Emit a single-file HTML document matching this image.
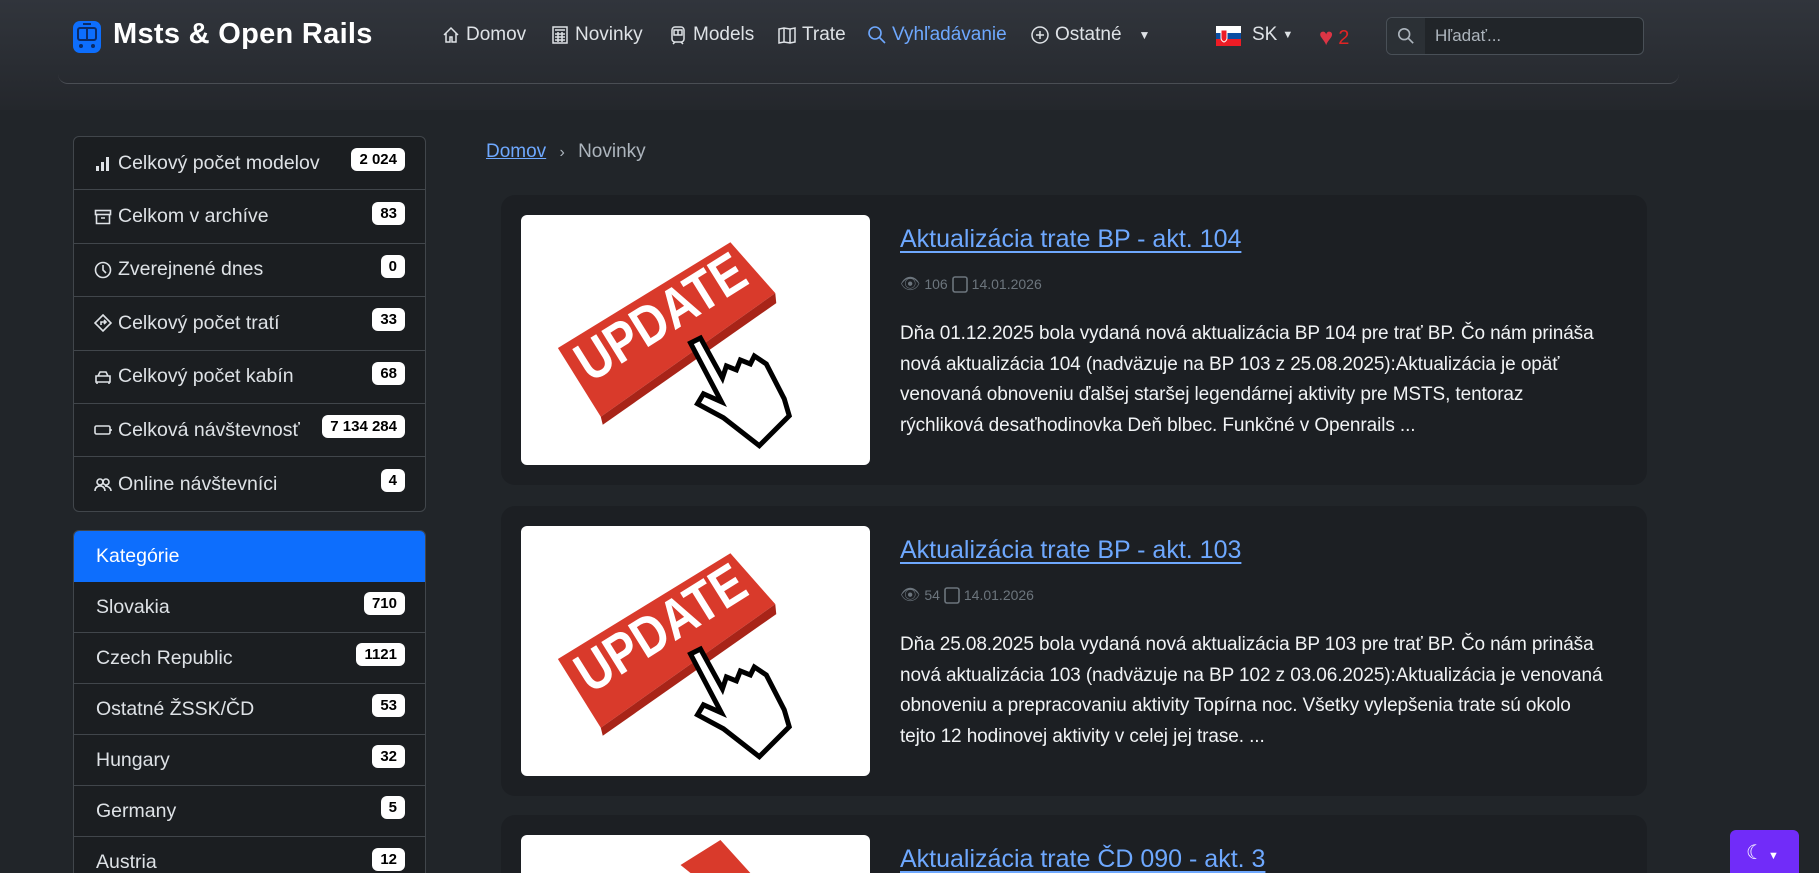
<!DOCTYPE html>
<html style="height:873px;overflow:hidden"><head><meta charset="utf-8"><style>
*{box-sizing:border-box;margin:0;padding:0}
html,body{width:1819px;height:873px;overflow:hidden}
body{background:#212529;font-family:"Liberation Sans","DejaVu Sans",sans-serif;color:#dee2e6}
#wrap{position:relative;width:1819px;height:873px;overflow:hidden}
.topbg{position:absolute;left:0;top:0;width:1819px;height:110px;background:linear-gradient(#31353c,#24272c)}
.navline{position:absolute;left:58px;top:20px;width:1621px;height:64px;border-bottom:1.5px solid #4a4e54;border-radius:0 0 10px 10px}
.brand{position:absolute;left:113px;top:18px;font-size:29px;font-weight:bold;color:#fff;letter-spacing:0.3px}
.nav{position:absolute;top:24px;font-size:19px;color:#dee2e6;display:flex;align-items:center;gap:5px}
.nav svg{width:20px;height:20px}
.search{position:absolute;left:1386px;top:17px;width:258px;height:38px;border:1px solid #495057;border-radius:6px;background:#212529}
.search .ic{position:absolute;left:0;top:0;width:38px;height:36px;background:#2b3035;border-radius:6px 0 0 6px}
.search span{position:absolute;left:48px;top:8px;font-size:17px;color:#adb5bd}
.box{position:absolute;left:73px;width:353px;background:#1b1e21;border:1px solid #41464b;border-radius:6px;overflow:hidden}
.row{height:53.4px;border-bottom:1px solid #41464b;display:flex;align-items:center;padding:0 20px 0 20px;font-size:19.5px;color:#dee2e6;position:relative}
.row:last-child{border-bottom:none}
.row svg{width:18px;height:18px;margin-right:6px;stroke:#dee2e6;fill:none;stroke-width:1.6}
.badge{position:absolute;right:20px;top:50%;transform:translateY(-65%);background:#fff;color:#000;font-weight:bold;font-size:15px;padding:3px 8px;border-radius:6px}
.cat .row{height:51px;padding-left:22px}
.cat .hd{background:#0d6efd;color:#fff;border-bottom:none}
.card{position:absolute;left:501px;width:1146px;height:290px;background:#1c1f23;border-radius:14px}
.img{position:absolute;left:20px;top:20px;width:349px;height:250px;background:#fff;border-radius:6px;overflow:hidden}
.title{position:absolute;left:399px;top:30px;font-size:25px;color:#6ea8fe;text-decoration:underline;text-underline-offset:4px}
.meta{position:absolute;left:399px;top:79px;font-size:14px;color:#6c757d;display:flex;align-items:center;gap:4px}
.txt{position:absolute;left:399px;top:124px;width:740px;font-size:19px;line-height:30.7px;color:#f1f3f5;white-space:nowrap;letter-spacing:-0.1px}
</style></head><body><div id="wrap">
<div class="topbg"></div>
<div class="navline"></div>
<svg style="position:absolute;left:73px;top:21px" width="28" height="32" viewBox="0 0 28 32"><rect x="0" y="0" width="28" height="32" rx="7" fill="#0d6efd"/><rect x="5" y="7" width="18" height="12" rx="2" fill="none" stroke="#0b2b66" stroke-width="2"/><line x1="14" y1="7" x2="14" y2="19" stroke="#0b2b66" stroke-width="2"/><rect x="10" y="2" width="8" height="2" fill="#0b2b66"/><circle cx="8" cy="25" r="2" fill="#0b2b66"/><circle cx="20" cy="25" r="2" fill="#0b2b66"/></svg>
<div class="brand">Msts &amp; Open Rails</div>
<div class="nav" style="left:441px"><svg viewBox="0 0 20 20" fill="none" stroke="#dee2e6" stroke-width="1.5"><path d="M3 10L10 3l7 7M5 8v9h4v-5h2v5h4V8"/></svg>Domov</div>
<div class="nav" style="left:550px"><svg viewBox="0 0 20 20" fill="none" stroke="#dee2e6" stroke-width="1.5"><rect x="3" y="2" width="14" height="16"/><path d="M5 5h10M5 9h10M5 12h10M5 15h10M8 7v10M12 7v10"/></svg>Novinky</div>
<div class="nav" style="left:668px"><svg viewBox="0 0 20 20" fill="none" stroke="#dee2e6" stroke-width="1.5"><rect x="4" y="2" width="12" height="15" rx="3"/><rect x="6" y="5" width="8" height="5"/><path d="M10 5v5M5 19l2-2M15 19l-2-2"/></svg>Models</div>
<div class="nav" style="left:777px"><svg viewBox="0 0 20 20" fill="none" stroke="#dee2e6" stroke-width="1.5"><path d="M2 4l5-1 6 1 5-1v14l-5 1-6-1-5 1zM7 3v14M13 4v14"/></svg>Trate</div>
<div class="nav" style="left:867px;color:#6ea8fe"><svg viewBox="0 0 20 20" fill="none" stroke="#6ea8fe" stroke-width="1.6"><circle cx="8" cy="8" r="6"/><path d="M12.5 12.5L18 18"/></svg>Vyhľadávanie</div>
<div class="nav" style="left:1030px"><svg viewBox="0 0 20 20" fill="none" stroke="#dee2e6" stroke-width="1.5"><circle cx="10" cy="10" r="8"/><path d="M10 6v8M6 10h8"/></svg>Ostatné <span style="font-size:12px;margin-left:12px">▼</span></div>
<svg style="position:absolute;left:1216px;top:26px" width="25" height="20"><rect width="25" height="7" fill="#fff"/><rect y="7" width="25" height="6" fill="#0b4ea2"/><rect y="13" width="25" height="7" fill="#ee1c25"/><path d="M5 4h6v8c0 3-3 4-3 4s-3-1-3-4z" fill="#ee1c25" stroke="#fff"/></svg>
<div class="nav" style="left:1252px;color:#dee2e6">SK<span style="font-size:11px">▼</span></div>
<div class="nav" style="left:1319px;color:#e02424;font-size:20px"><span style="color:#dc3545;font-size:24px">♥</span>2</div>
<div class="search"><div class="ic"><svg style="position:absolute;left:10px;top:9px" width="18" height="18" viewBox="0 0 20 20" fill="none" stroke="#adb5bd" stroke-width="1.8"><circle cx="8" cy="8" r="6"/><path d="M12.5 12.5L18 18"/></svg></div><span>Hľadať...</span></div>

<div class="box" style="top:136px">
<div class="row"><svg viewBox="0 0 18 18" style="fill:#dee2e6;stroke:none"><rect x="2" y="12" width="3" height="5"/><rect x="7" y="8" width="3" height="9"/><rect x="12" y="3" width="3" height="14"/></svg>Celkový počet modelov<span class="badge">2 024</span></div>
<div class="row"><svg viewBox="0 0 18 18"><rect x="1.5" y="2.5" width="15" height="4"/><path d="M2.5 6.5v9h13v-9M7 10h4"/></svg>Celkom v archíve<span class="badge">83</span></div>
<div class="row"><svg viewBox="0 0 18 18"><circle cx="9" cy="9" r="7.5"/><path d="M9 4v5l3 3"/></svg>Zverejnené dnes<span class="badge">0</span></div>
<div class="row"><svg viewBox="0 0 18 18"><path d="M9 1l8 8-8 8-8-8z M7 11V8h4M10 6l2 2-2 2"/></svg>Celkový počet tratí<span class="badge">33</span></div>
<div class="row"><svg viewBox="0 0 18 18"><path d="M4 8l2-4h6l2 4M2 8h14v6H2zM3 14v2M15 14v2"/></svg>Celkový počet kabín<span class="badge">68</span></div>
<div class="row"><svg viewBox="0 0 18 18"><rect x="1" y="5" width="15" height="8" rx="1.5"/><path d="M17 8v2"/></svg>Celková návštevnosť<span class="badge">7 134 284</span></div>
<div class="row"><svg viewBox="0 0 18 18"><circle cx="6" cy="7" r="3"/><circle cx="12" cy="7" r="3"/><path d="M1 16c0-3 2-5 5-5s5 2 5 5M11 11c3 0 6 2 6 5"/></svg>Online návštevníci<span class="badge">4</span></div>
</div>

<div class="box cat" style="top:530px;height:360px">
<div class="row hd">Kategórie</div>
<div class="row">Slovakia<span class="badge">710</span></div>
<div class="row">Czech Republic<span class="badge">1121</span></div>
<div class="row">Ostatné ŽSSK/ČD<span class="badge">53</span></div>
<div class="row">Hungary<span class="badge">32</span></div>
<div class="row">Germany<span class="badge">5</span></div>
<div class="row">Austria<span class="badge">12</span></div>
</div>

<div style="position:absolute;left:486px;top:141px;font-size:19px;color:#adb5bd"><span style="color:#6ea8fe;text-decoration:underline">Domov</span> <span style="margin:0 8px;font-size:16px">›</span> Novinky</div>

<div class="card" style="top:195px">
<div class="img"><svg width="349" height="250" viewBox="0 0 350 250"><polygon points="37,133 210,27 255,78 80,202" fill="#d93a2b"/><polygon points="80,202 255,78 256,88 82,210" fill="#a82418"/><text x="0" y="0" transform="translate(150,118) rotate(-32)" text-anchor="middle" font-family="Liberation Sans" font-weight="bold" font-size="56" fill="#fff" textLength="190" lengthAdjust="spacingAndGlyphs">UPDATE</text><path d="M170 128l10-5 22 40 4-12 10 4 4-10 10 4 4-8 12 8 18 35 5 17-30 30-36-28-26-14 6-10 18 8z" fill="#fff" stroke="#000" stroke-width="5"/></svg></div>
<div class="title">Aktualizácia trate BP - akt. 104</div>
<div class="meta"><span style="font-size:16px">👁</span>106 <svg width="16" height="18" viewBox="0 0 16 18"><rect x="1" y="2" width="14" height="15" rx="2" fill="none" stroke="#6c757d" stroke-width="1.6"/></svg>14.01.2026</div>
<div class="txt">Dňa 01.12.2025 bola vydaná nová aktualizácia BP 104 pre trať BP. Čo nám prináša<br>nová aktualizácia 104 (nadväzuje na BP 103 z 25.08.2025):Aktualizácia je opäť<br>venovaná obnoveniu ďalšej staršej legendárnej aktivity pre MSTS, tentoraz<br>rýchliková desaťhodinovka Deň blbec. Funkčné v Openrails ...</div>
</div>

<div class="card" style="top:506px">
<div class="img"><svg width="349" height="250" viewBox="0 0 350 250"><polygon points="37,133 210,27 255,78 80,202" fill="#d93a2b"/><polygon points="80,202 255,78 256,88 82,210" fill="#a82418"/><text x="0" y="0" transform="translate(150,118) rotate(-32)" text-anchor="middle" font-family="Liberation Sans" font-weight="bold" font-size="56" fill="#fff" textLength="190" lengthAdjust="spacingAndGlyphs">UPDATE</text><path d="M170 128l10-5 22 40 4-12 10 4 4-10 10 4 4-8 12 8 18 35 5 17-30 30-36-28-26-14 6-10 18 8z" fill="#fff" stroke="#000" stroke-width="5"/></svg></div>
<div class="title">Aktualizácia trate BP - akt. 103</div>
<div class="meta"><span style="font-size:16px">👁</span>54 <svg width="16" height="18" viewBox="0 0 16 18"><rect x="1" y="2" width="14" height="15" rx="2" fill="none" stroke="#6c757d" stroke-width="1.6"/></svg>14.01.2026</div>
<div class="txt">Dňa 25.08.2025 bola vydaná nová aktualizácia BP 103 pre trať BP. Čo nám prináša<br>nová aktualizácia 103 (nadväzuje na BP 102 z 03.06.2025):Aktualizácia je venovaná<br>obnoveniu a prepracovaniu aktivity Topírna noc. Všetky vylepšenia trate sú okolo<br>tejto 12 hodinovej aktivity v celej jej trase. ...</div>
</div>

<div class="card" style="top:815px;height:58px;border-radius:14px 14px 0 0;overflow:hidden">
<div class="img" style="height:38px;border-radius:6px 6px 0 0"><svg width="349" height="38" viewBox="0 0 350 38"><polygon points="160,30 200,5 230,38 170,38" fill="#d93a2b"/></svg></div>
<div class="title">Aktualizácia trate ČD 090 - akt. 3</div>
</div>

<div style="position:absolute;left:1730px;top:830px;width:69px;height:43px;background:#712cf9;border-radius:6px 6px 0 0;color:#fff;font-size:20px;padding:10px 0 0 16px">☾<span style="font-size:11px;margin-left:4px">▼</span></div>
</div></body></html>
